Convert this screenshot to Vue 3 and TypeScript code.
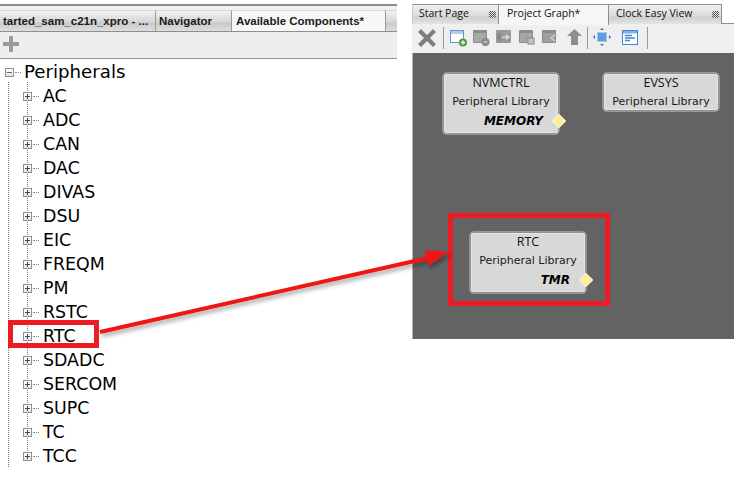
<script setup lang="ts">
const items: string[] = ['AC','ADC','CAN','DAC','DIVAS','DSU','EIC','FREQM','PM','RSTC','RTC','SDADC','SERCOM','SUPC','TC','TCC'];
interface GraphNode { name: string; tag?: string; cls: string }
const nodes: GraphNode[] = [
  { name: 'NVMCTRL', tag: 'MEMORY', cls: 'n-nvm' },
  { name: 'EVSYS', cls: 'n-evsys' },
  { name: 'RTC', tag: 'TMR', cls: 'n-rtc' },
];
</script>

<template>
  <div class="page">
    <section class="left">
      <div class="l-tabs">
        <div class="l-tab t1">tarted_sam_c21n_xpro - ...</div>
        <div class="l-tab t2">Navigator</div>
        <div class="l-tab t3">Available Components*</div>
        <div class="l-tab t4"></div>
      </div>
      <div class="l-toolbar">
        <svg width="16" height="16" viewBox="0 0 16 16"><path d="M6 0h4v6h6v4h-6v6H6v-6H0V6h6z" fill="#9b9b9b"/></svg>
      </div>
      <div class="tree">
        <div class="root-row">
          <span class="exp"><i class="h"></i></span>
          <span class="dots"></span>
          <span class="root-label">Peripherals</span>
        </div>
        <div class="children">
          <div class="rows">
            <div v-for="it in items" :key="it" class="row">
              <span class="exp"><i class="h blue"></i><i class="v"></i></span>
              <span class="dots"></span>
              <span class="label">{{ it }}</span>
            </div>
          </div>
        </div>
      </div>
    </section>

    <section class="right">
      <div class="r-tabs">
        <div class="r-tab rt1">Start Page<span class="close"></span></div>
        <div class="r-tab rt2">Project Graph*</div>
        <div class="r-tab rt3">Clock Easy View<span class="close"></span></div>
      </div>
      <div class="r-toolbar">
        <svg class="ic-x" width="18" height="18" viewBox="0 0 18 18"><path d="M3 0l6 6 6-6 3 3-6 6 6 6-3 3-6-6-6 6-3-3 6-6-6-6z" fill="#7d7d7d"/></svg>
        <span class="sep s1"></span>
        <svg class="ic i1" width="17" height="17" viewBox="0 0 17 17"><rect x="0.5" y="0.5" width="13" height="12" fill="#fff" stroke="#6e93c8"/><rect x="1" y="1" width="12" height="3" fill="#b5cdea"/><circle cx="13" cy="12.5" r="4" fill="#4f9a43"/><path d="M11 12.5h4M13 10.5v4" stroke="#fff" stroke-width="1.4"/></svg>
        <svg class="ic i2" width="17" height="17" viewBox="0 0 17 17"><rect x="0" y="0" width="14" height="13" rx="1" fill="#8c8c8c"/><rect x="1" y="3" width="12" height="9" fill="#a8a8a8"/><circle cx="12.5" cy="12" r="4" fill="#8a8a8a"/><path d="M10.5 12h4" stroke="#ccc" stroke-width="1.3"/></svg>
        <svg class="ic i3" width="17" height="17" viewBox="0 0 17 17"><rect x="0" y="0" width="15" height="13" rx="1" fill="#9a9a9a"/><path d="M6 6.5h4V4l4 3-4 3V8H6z" fill="#d8d8d8"/><rect x="1" y="3" width="4" height="8" fill="#8a8a8a"/></svg>
        <svg class="ic i4" width="17" height="17" viewBox="0 0 17 17"><rect x="0" y="0" width="14" height="13" rx="1" fill="#8c8c8c"/><rect x="1" y="3" width="12" height="9" fill="#a6a6a6"/><rect x="9" y="8" width="6" height="6" fill="#c2c2c2" stroke="#888"/></svg>
        <svg class="ic i5" width="17" height="17" viewBox="0 0 17 17"><rect x="0" y="0" width="14" height="13" rx="1" fill="#8c8c8c"/><rect x="1" y="3" width="12" height="9" fill="#a0a0a0"/><path d="M13 5l-4 3 4 3" fill="none" stroke="#d0d0d0" stroke-width="1.2"/></svg>
        <svg class="ic i6" width="15" height="16" viewBox="0 0 15 16"><path d="M7.5 0L15 7h-4v9H4V7H0z" fill="#8e8e8e"/></svg>
        <span class="sep s2"></span>
        <svg class="ic i7" width="18" height="18" viewBox="0 0 18 18"><rect x="4.5" y="4.5" width="9" height="9" fill="#5f9be0" stroke="#a9c6ea"/><path d="M9 0l2 2H7zM9 18l-2-2h4zM0 9l2-2v4zM18 9l-2 2V7z" fill="#2f6fc0"/></svg>
        <svg class="ic i8" width="16" height="15" viewBox="0 0 16 15"><rect x="0.5" y="0.5" width="15" height="14" fill="#fff" stroke="#3f86d8"/><rect x="1" y="1" width="14" height="2.5" fill="#7fb0e6"/><path d="M3 5.5h7M3 8h10M3 10.5h5" stroke="#3f86d8" stroke-width="1.3"/></svg>
        <span class="sep s3"></span>
      </div>
      <div class="canvas">
        <div v-for="n in nodes" :key="n.name" class="node" :class="n.cls">
          <div class="n-name">{{ n.name }}</div>
          <div class="n-sub">Peripheral Library</div>
          <div v-if="n.tag" class="n-tag">{{ n.tag }}</div>
          <span v-if="n.tag" class="pin"></span>
        </div>
      </div>
    </section>

    <svg class="overlay" width="749" height="481" viewBox="0 0 749 481">
      <defs>
        <filter id="sh" x="-10%" y="-30%" width="120%" height="180%">
          <feDropShadow dx="2" dy="3" stdDeviation="2" flood-color="#000" flood-opacity="0.35"/>
        </filter>
      </defs>
      <rect x="10.5" y="322.5" width="86" height="23" fill="none" stroke="#ed1c24" stroke-width="5"/>
      <rect x="450.5" y="215.5" width="157" height="88" fill="none" stroke="#ed1c24" stroke-width="5"/>
      <g filter="url(#sh)">
        <path d="M100 332L428 258" stroke="#f01414" stroke-width="4" fill="none"/>
        <path d="M449 252L425 250L428 266z" fill="#f01414"/>
      </g>
    </svg>
  </div>
</template>

<style scoped>
.page {
  position: relative;
  width: 749px;
  height: 481px;
  overflow: hidden;
  background: #fff;
  display: flex;
  align-items: flex-start;
}
.left { width: 397px; margin-top: 4px; flex: none; }
.l-tabs {
  border-top: 2px solid #8c8c8c;
  padding-top: 4px;
  background: #f0f0f0;
  display: flex;
  height: 21px;
  border-bottom: 1px solid #8e8e8e;
  box-sizing: content-box;
}
.l-tab {
  height: 21px;
  box-sizing: border-box;
  border-top: 1px solid #d8d8d8;
  border-right: 1px solid #9a9a9a;
  background: linear-gradient(#f2f2f2, #d6d6d6 55%, #c9c9c9 60%, #dedede);
  font: bold 11.5px/21px "Liberation Sans", Arial, sans-serif;
  color: #1b1b1b;
  white-space: nowrap;
  overflow: hidden;
  flex: none;
}
.t1 { width: 156px; padding-left: 3px; }
.t2 { width: 76px; padding-left: 3px; }
.t3 { width: 154px; padding-left: 4px; background: #f7f7f7; }
.t4 { width: 11px; border-right: 0; }
.l-toolbar {
  height: 22px;
  background: #eeeeee;
  border-bottom: 1px solid #8e8e8e;
  padding: 4px 0 0 3px;
  box-sizing: content-box;
}
.l-toolbar svg { display: block; }
.tree { padding: 1px 0 0 0; font-family: "DejaVu Sans", sans-serif; color: #000; }
.root-row { display: flex; align-items: center; height: 24px; padding-left: 5px; margin-bottom: 0; }
.root-label { font-size: 18.2px; margin-left: 3px; margin-top: -1px; }
.exp {
  position: relative;
  display: block;
  flex: none;
  width: 9px;
  height: 9px;
  box-sizing: border-box;
  border: 1px solid #8f8f8f;
  background: linear-gradient(#fff, #e4e4e4);
}
.exp .h { position: absolute; left: 1px; top: 3px; width: 5px; height: 1px; background: #666; }
.exp .h.blue, .exp .v { background: #2c4a86; }
.exp .v { position: absolute; left: 3px; top: 1px; width: 1px; height: 5px; }
.dots { width: 6px; flex: none; height: 0; border-top: 1px dotted #8a8a8a; margin-left: 1px; }
.children {
  margin-left: 8px;
  padding-left: 14px;
  padding-bottom: 11px;
  border-left: 1px dotted #777;
}
.rows {
  background-image: linear-gradient(#777 50%, transparent 50%);
  background-size: 1px 2px;
  background-repeat: repeat-y;
  background-position: 4px 0;
  margin-top: -2px;
  padding-top: 2px;
  box-sizing: content-box;
  height: 372px;
}
.row { display: flex; align-items: center; height: 24px; }
.label { font-size: 17.4px; margin-left: 4px; }

.right { width: 322px; margin-left: 15px; margin-top: 3px; flex: none; }
.r-tabs {
  display: flex;
  height: 19px;
  padding-top: 1px;
  background: #fff;
  border-bottom: 1px solid #8e8e8e;
  box-sizing: content-box;
  font: 10.5px/19px "Open Sans", "DejaVu Sans", sans-serif;
  color: #111;
}
.r-tab {
  position: relative;
  height: 20px;
  box-sizing: border-box;
  border: 1px solid #8e8e8e;
  border-bottom: 0;
  border-left: 0;
  white-space: nowrap;
  line-height: 16px;
  padding-left: 7px;
  background: linear-gradient(#f0f0f0, #dcdcdc 55%, #cfcfcf 65%, #e4e4e4);
}
.rt1 { width: 87px; border-left: 1px solid #c8c8c8; padding-left: 6px; }
.rt2 { width: 110px; background: #f6f6f6; height: 21px; z-index: 1; padding-left: 8px; }
.rt3 { width: 113px; }
.close {
  position: absolute;
  right: 2px;
  top: 6px;
  width: 7px;
  height: 7px;
  background: repeating-conic-gradient(#555 0 25%, #e6e6e6 0 50%) 0 0 / 2px 2px;
}
.r-toolbar {
  position: relative;
  height: 29px;
  background: #efefef;
}
.r-toolbar svg { position: absolute; display: block; }
.ic-x { left: 6px; top: 5px; }
.i1 { left: 38px; top: 6px; }
.i2 { left: 61px; top: 6px; }
.i3 { left: 84px; top: 6px; }
.i4 { left: 107px; top: 6px; }
.i5 { left: 130px; top: 6px; }
.i6 { left: 155px; top: 5px; }
.i7 { left: 181px; top: 4px; }
.i8 { left: 210px; top: 6px; }
.sep { position: absolute; top: 3px; width: 1px; height: 22px; background: #9a9a9a; }
.s1 { left: 31px; }
.s2 { left: 175px; }
.s3 { left: 235px; }
.canvas {
  position: relative;
  height: 286px;
  background: #636363;
  border-left: 1px solid #b0b0b8;
  box-sizing: border-box;
}
.node {
  position: absolute;
  box-sizing: border-box;
  width: 116px;
  background: #d8d8d8;
  border: 1px solid #8f8f8f;
  outline: 1px solid #e6e6e6;
  outline-offset: -2px;
  border-radius: 4px;
  text-align: center;
  color: #111;
  box-shadow: 0 0 0 0.5px #cfcfcf;
}
.n-nvm { left: 30px; top: 20px; height: 61px; }
.n-evsys { left: 190px; top: 20px; height: 38px; }
.n-rtc { left: 57px; top: 179px; height: 61px; }
.n-name { font: 12.5px/15px "Open Sans", "Liberation Sans", sans-serif; margin-top: 1px; }
.n-sub { font: 11px/14px "DejaVu Sans", sans-serif; margin-top: 5px; color: #1a1a1a; }
.n-tag {
  position: absolute;
  right: 15px;
  bottom: 4px;
  font: italic bold 12px/15px "DejaVu Sans", sans-serif;
  color: #000;
}
.pin {
  position: absolute;
  right: -6px;
  bottom: 7px;
  width: 8px;
  height: 8px;
  background: #ffef8a;
  border: 1px solid #f4f4f4;
  transform: rotate(45deg);
}
.overlay { position: absolute; left: 0; top: 0; pointer-events: none; }
</style>

<style>
html, body { margin: 0; background: #fff; }
</style>
